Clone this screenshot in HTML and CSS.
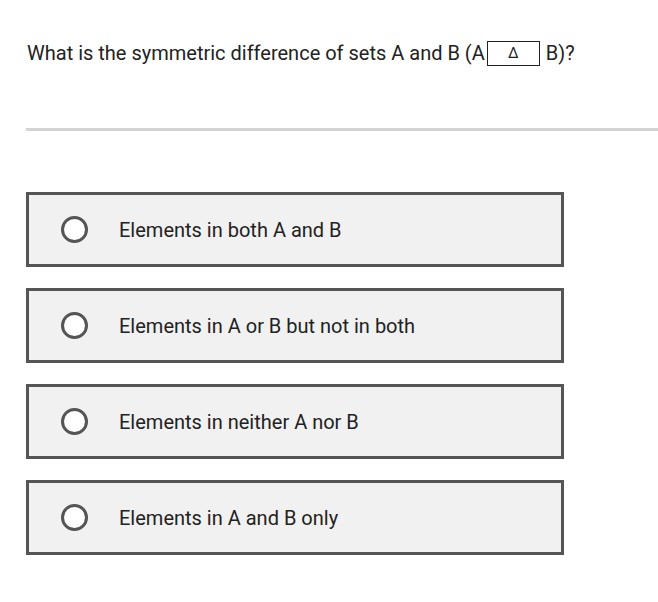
FILE: index.html
```html
<!DOCTYPE html>
<html>
<head>
<meta charset="utf-8">
<link rel="stylesheet" href="styles.css">
</head>
<body>
<div class="page">
  <div class="question">What is the symmetric difference of sets A and B (A<span class="op">Δ</span>B)?</div>
  <div class="rule"></div>
  <div class="options">
    <div class="option"><span class="radio"></span><span class="label">Elements in both A and B</span></div>
    <div class="option"><span class="radio"></span><span class="label">Elements in A or B but not in both</span></div>
    <div class="option"><span class="radio"></span><span class="label">Elements in neither A nor B</span></div>
    <div class="option"><span class="radio"></span><span class="label">Elements in A and B only</span></div>
  </div>
</div>
</body>
</html>
```
FILE: styles.css
```css
html, body {
  margin: 0;
  padding: 0;
  background: #ffffff;
}
.page {
  padding: 40px 0 0 26px;
  font-family: Roboto, "Liberation Sans", sans-serif;
  color: #222222;
}
.question {
  font-size: 20px;
  line-height: 26px;
  padding-left: 1px;
  display: flex;
  align-items: center;
}
.op {
  display: inline-flex;
  align-items: center;
  justify-content: center;
  width: 51px;
  height: 23px;
  border: 1px solid #222;
  font-size: 15px;
  margin: 0 6px 0 2px;
  background: #fff;
}
.rule {
  height: 3px;
  background: #d3d3d3;
  margin-top: 62px;
}
.options {
  margin-top: 61px;
  display: flex;
  flex-direction: column;
  gap: 21px;
  width: 538px;
}
.option {
  box-sizing: border-box;
  height: 75px;
  border: 3px solid #555555;
  background: #f1f1f1;
  display: flex;
  align-items: center;
  padding-left: 32px;
}
.radio {
  box-sizing: border-box;
  width: 27px;
  height: 27px;
  border: 3px solid #555555;
  border-radius: 50%;
  background: #fff;
  flex: none;
}
.label {
  margin-left: 31px;
  font-size: 20px;
  color: #222;
}
```
